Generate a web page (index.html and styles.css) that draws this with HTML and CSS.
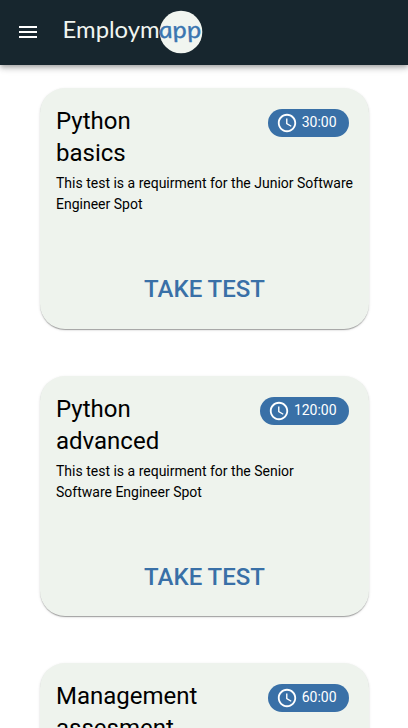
FILE: index.html
```html
<!DOCTYPE html>
<html lang="en">
<head>
<meta charset="utf-8">
<meta name="viewport" content="width=device-width, initial-scale=1">
<title>Employmapp</title>
<link rel="stylesheet" href="styles.css">
</head>
<body>
<svg class="defs" aria-hidden="true">
  <symbol id="clock" viewBox="0 0 24 24">
    <path d="M11.99 2C6.47 2 2 6.48 2 12s4.47 10 9.99 10C17.52 22 22 17.52 22 12S17.52 2 11.99 2zM12 20c-4.42 0-8-3.58-8-8s3.58-8 8-8 8 3.58 8 8-3.58 8-8 8z"/>
    <path d="M12.5 7H11v6l5.25 3.15.75-1.23-4.5-2.67z"/>
  </symbol>
</svg>
<header class="appbar">
  <button class="menu" aria-label="Menu">
    <svg viewBox="0 0 24 24"><path d="M3 18h18v-2H3v2zm0-5h18v-2H3v2zm0-7v2h18V6H3z"/></svg>
  </button>
  <svg class="logo" viewBox="0 0 142 46">
    <circle cx="118" cy="23" r="21.3"/>
    <text class="logo-name" x="-0.4" y="29" textLength="97" lengthAdjust="spacingAndGlyphs">Employm</text>
    <text class="logo-app" transform="translate(97 29) skewX(11)" x="0" y="0" textLength="42.5" lengthAdjust="spacingAndGlyphs">app</text>
  </svg>
</header>
<main class="tests">
  <article class="card">
    <div class="card-head">
      <h2>Python basics</h2>
      <span class="chip"><svg><use href="#clock"/></svg><span>30:00</span></span>
    </div>
    <p>This test is a requirment for the Junior Software Engineer Spot</p>
    <button class="take">Take test</button>
  </article>
  <article class="card">
    <div class="card-head">
      <h2>Python advanced</h2>
      <span class="chip"><svg><use href="#clock"/></svg><span>120:00</span></span>
    </div>
    <p>This test is a requirment for the Senior Software Engineer Spot</p>
    <button class="take">Take test</button>
  </article>
  <article class="card">
    <div class="card-head">
      <h2>Management assesment</h2>
      <span class="chip"><svg><use href="#clock"/></svg><span>60:00</span></span>
    </div>
    <p>This test is a requirment for the Management Spot</p>
    <button class="take">Take test</button>
  </article>
</main>
</body>
</html>
```
FILE: styles.css
```css
* { box-sizing: border-box; }
html { scrollbar-width: none; }
body {
  margin: 0;
  height: 100vh;
  overflow: hidden;
  background: #fff;
  color: #000;
  font-family: Roboto, "Liberation Sans", sans-serif;
}
button { border: 0; padding: 0; background: none; font-family: inherit; }
.defs { display: none; }
.appbar {
  position: relative;
  display: flex;
  align-items: center;
  height: 65px;
  padding: 0 16px 1px;
  background: #17262e;
  box-shadow: 0 2px 4px -1px rgba(0,0,0,.2), 0 4px 5px rgba(0,0,0,.14), 0 1px 10px rgba(0,0,0,.12);
}
.menu { width: 24px; height: 24px; margin-right: 23px; }
.menu svg { display: block; width: 24px; height: 24px; fill: #fff; }
.logo { width: 142px; height: 46px; fill: #f1f5f0; }
.logo text { font-family: Lato, sans-serif; font-size: 23.5px; }
.logo .logo-app {
  fill: #3b76b0;
  stroke: #3b76b0;
  stroke-width: .3px;
  stroke-linejoin: round;
  font-style: italic;
}
.tests {
  display: flex;
  flex-direction: column;
  gap: 47px;
  padding: 23px 39px 0 40px;
}
.card {
  display: flex;
  flex-direction: column;
  flex: none;
  height: 240.6px;
  padding: 17px 16px 16px;
  border-radius: 25px;
  background: #eef3ed;
  box-shadow: 0 2px 1px -1px rgba(0,0,0,.2), 0 1px 1px rgba(0,0,0,.14), 0 1px 3px rgba(0,0,0,.12);
}
.card-head { display: flex; justify-content: space-between; align-items: flex-start; }
.card h2 { width: 150px; margin: 0; font-size: 24px; font-weight: 400; line-height: 32px; }
.chip {
  display: flex;
  align-items: center;
  height: 28px;
  margin: 4px 4px 0 0;
  padding: 0 12.4px 0 8px;
  border-radius: 14px;
  background: #3970a7;
  color: #fff;
  font-size: 14px;
}
.chip span { padding-bottom: 2px; }
.chip svg { width: 22px; height: 22px; margin-right: 4px; fill: #fff; }
.card p { margin: 4px 0 0; font-size: 14px; line-height: 21px; }
.take {
  align-self: center;
  margin: auto 0 2.6px;
  color: #3970a7;
  font-size: 24px;
  font-weight: 500;
  line-height: 42px;
  text-transform: uppercase;
}
```
